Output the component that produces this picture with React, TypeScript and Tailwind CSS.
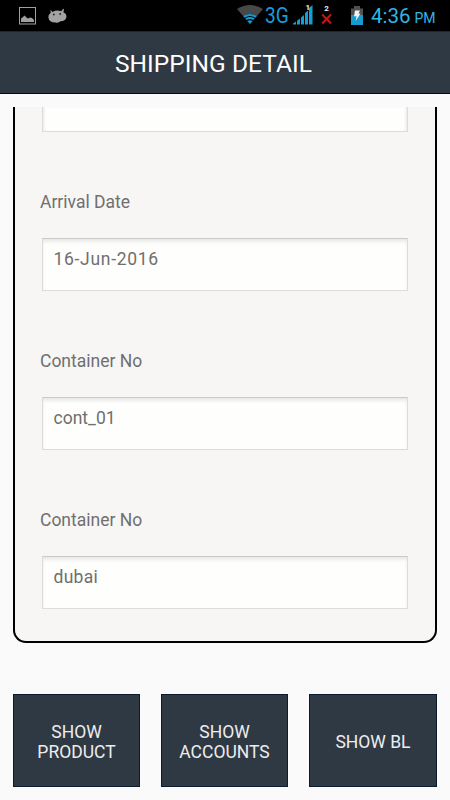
import clsx from 'clsx'

interface Field {
  label: string
  value: string
  spacing: string
}

const fields: Field[] = [
  { label: 'Arrival Date', value: '16-Jun-2016', spacing: 'tracking-[0.7px]' },
  { label: 'Container No', value: 'cont_01', spacing: 'tracking-[0px]' },
  { label: 'Container No', value: 'dubai', spacing: 'tracking-[0.3px]' },
]

const actions = ['SHOW\nPRODUCT', 'SHOW\nACCOUNTS', 'SHOW BL']

function StatusBar() {
  return (
    <div className="flex h-[31px] shrink-0 items-start bg-black pl-[19px] pr-[12px] text-[#33b5e5]">
      <svg className="mt-[7px]" width="17" height="18" viewBox="0 0 17 18">
        <rect x="0.5" y="0.5" width="16" height="16.5" fill="none" stroke="#a0a0a0" />
        <path d="M2 15V11.5L4 10L5.5 8.5L7.5 10.5L9 11.5L11 10.5L13 11L15 13V15Z" fill="#a0a0a0" />
      </svg>
      <svg className="ml-3 mt-[8px]" width="19" height="16" viewBox="0 0 19 16">
        <path
          d="M2.5 1.5L4.3 4Q9 1.5 13.2 3.2L15.2 .7L16 1.3L15.4 4.3Q18.8 6 18.4 9Q18 13 12.5 13.3Q10.5 15.2 7.5 14.5Q1 14.5 .4 9.5Q.2 6.7 2.7 4.8Z"
          fill="#a3a3a3"
        />
        <circle cx="5.8" cy="6.5" r="0.9" fill="#222" />
        <circle cx="12.2" cy="6" r="0.9" fill="#222" />
      </svg>

      {/* wifi, only the inner arcs are lit */}
      <svg className="ml-auto mt-[5px]" width="26" height="19" viewBox="0 0 26 19">
        <path d="M0 4Q13 -4 26 4L13 19Z" fill="#484848" />
        <path d="M6.2 11.2Q13 7 19.8 11.2L13 19Z" fill="#000" />
        <path d="M6.2 11Q13 6.8 19.8 11L18.4 12.7Q13 9.3 7.6 12.7Z" fill="#169bd0" />
        <path d="M8.3 13.5Q13 10.6 17.7 13.5L16.4 15Q13 13 9.6 15Z" fill="#169bd0" />
        <path d="M10.4 16Q13 14.4 15.6 16L13 19Z" fill="#169bd0" />
      </svg>
      <span className="-mr-[3px] ml-[2px] mt-[2px] w-[29px] origin-left scale-x-[.85] text-[22.5px] leading-[26px] text-[#149ed8]">
        3G
      </span>
      <svg className="ml-[2px] mt-[3px]" width="22" height="22" viewBox="0 0 22 22">
        <path
          d="M0 21.5V20.5L3 18.5V21.5ZM4 21.5V17.8L7 15.5V21.5ZM8 21.5V14.5L11 12V21.5ZM12 21.5V10L15 7.5V21.5ZM16 21.5V5L19.5 2V21.5Z"
          fill="#149ed8"
        />
        <text x="12.5" y="7" fill="#f0f0f0" fontFamily="Roboto, sans-serif" fontSize="8" fontWeight="700">
          1
        </text>
      </svg>
      <svg className="ml-[6px] mt-[3px]" width="12" height="22" viewBox="0 0 12 22">
        <text x="3.2" y="8" fill="#eee" fontFamily="Roboto, sans-serif" fontSize="8" fontWeight="700">
          2
        </text>
        <path d="M1.2 11.5L10 20.5M10 11.5L1.2 20.5" stroke="#c9150f" strokeWidth="2.1" />
      </svg>
      <svg className="ml-[18px] mt-[6px]" width="12" height="19" viewBox="0 0 12 19">
        <path d="M0 2.5H3V0H9V2.5H12V9H0Z" fill="#505050" />
        <path d="M0 9H12V19H0Z" fill="#169bd0" />
        <path d="M4 4.5H9L7.5 7.5H9.5L4.7 15L5.5 10.2H3Z" fill="#f3f3f3" />
      </svg>
      <div className="ml-[8px] mt-[3px] flex w-[67px] items-baseline whitespace-nowrap leading-[26px]">
        <span className="text-[20.5px]">4:36</span>
        <span className="ml-[4px] text-[14px]">PM</span>
      </div>
    </div>
  )
}

function FieldBox({ value, spacing, clipped = false }: { value?: string; spacing?: string; clipped?: boolean }) {
  return (
    <div
      className={clsx(
        'mx-[27px] border border-[#dcdcda] bg-[#fefefd] pl-[10.5px] text-[17.5px] leading-[22px]',
        spacing,
        clipped
          ? 'h-[25px] border-t-0 shadow-[inset_3px_0_3px_-2px_#e6e6e4,inset_-3px_0_3px_-2px_#e6e6e4]'
          : 'h-[53px] border-t-[#c9c9c8] pt-[9px] shadow-[inset_0_3px_4px_-1px_#e3e3e1]'
      )}
    >
      {value}
    </div>
  )
}

export default function App() {
  return (
    <div className="flex h-[800px] w-[450px] flex-col overflow-hidden bg-[#fafafb] font-[Roboto,sans-serif]">
      <StatusBar />

      <header className="flex h-[63px] shrink-0 items-center border-b border-t border-b-[#050b14] border-t-[#1d2730] bg-[#2f3944] pl-[115px] pt-[3px]">
        <h1 className="text-[24.5px] leading-7 tracking-[0.05px] text-white">SHIPPING DETAIL</h1>
      </header>

      <main className="mx-[13px] mt-[13px] h-[536px] shrink-0 rounded-b-[13px] border-2 border-t-0 border-black bg-[#f7f6f5] text-[#6f6f6f]">
        <FieldBox clipped />
        {fields.map((field, i) => (
          <section key={i} className="flex h-[159px] flex-col justify-end">
            <h2 className="mb-[25px] ml-[25px] text-[17.5px] leading-[22px]">{field.label}</h2>
            <FieldBox value={field.value} spacing={field.spacing} />
          </section>
        ))}
      </main>

      <div className="ml-[13px] mt-[51px] flex gap-[21px]">
        {actions.map((action) => (
          <button
            key={action}
            className="h-[93px] w-[127px] whitespace-pre-line border border-[#0b1c2e] bg-[#2f3944] px-4 pt-[3px] text-[17.5px] leading-5 text-[#ededed] last:w-[128px]"
          >
            {action}
          </button>
        ))}
      </div>
    </div>
  )
}
